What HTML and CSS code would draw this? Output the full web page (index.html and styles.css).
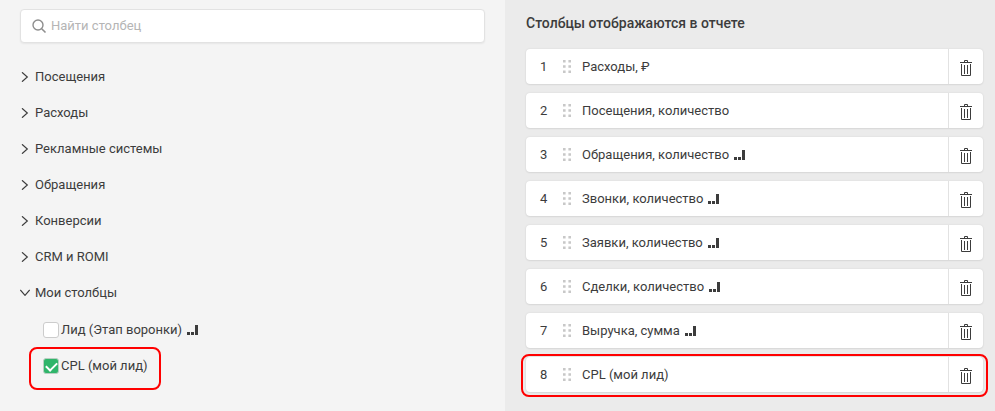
FILE: index.html
```html
<!DOCTYPE html>
<html lang="ru">
<head>
<meta charset="utf-8">
<title>Столбцы отчета</title>
<meta name="viewport" content="width=device-width, initial-scale=1">
<link rel="stylesheet" href="styles.css">
</head>
<body>
<svg class="symbols" aria-hidden="true">
  <symbol id="chevron" viewBox="0 0 10 10"><path d="M2 0.3 7.3 5 2 9.7" fill="none" stroke="currentColor" stroke-width="1.2"/></symbol>
  <symbol id="bars" viewBox="0 0 11 10"><path d="M0 7h3v3H0zM4 7h3v3H4zM8 0h3v10H8z" fill="currentColor"/></symbol>
  <symbol id="grip" viewBox="0 0 8 13"><path d="M0 0h2.6v2.4H0zM5.4 0H8v2.4H5.4zM0 5.2h2.6v2.6H0zM5.4 5.2H8v2.6H5.4zM0 10.6h2.6V13H0zM5.4 10.6H8V13H5.4z" fill="currentColor"/></symbol>
  <symbol id="trash" viewBox="0 0 12 16"><path d="M4.5 2V.5h3V2M0 2.5h12M1.5 4v11.5h9V4M4.5 5v9M7.5 5v9" fill="none" stroke="currentColor"/></symbol>
</svg>
<main class="layout">
  <section class="picker">
    <label class="search">
      <svg class="search-icon" viewBox="0 0 15 15" aria-hidden="true"><circle cx="6" cy="6" r="5" fill="none" stroke="currentColor" stroke-width="1.4"/><path d="M9.7 9.7 13.5 13.5" stroke="currentColor" stroke-width="1.6"/></svg>
      <input class="search-input" type="search" placeholder="Найти столбец" aria-label="Найти столбец">
    </label>
    <div class="groups">
      <button class="group" type="button"><svg class="chevron"><use href="#chevron"/></svg>Посещения</button>
      <button class="group" type="button"><svg class="chevron"><use href="#chevron"/></svg>Расходы</button>
      <button class="group" type="button"><svg class="chevron"><use href="#chevron"/></svg>Рекламные системы</button>
      <button class="group" type="button"><svg class="chevron"><use href="#chevron"/></svg>Обращения</button>
      <button class="group" type="button"><svg class="chevron"><use href="#chevron"/></svg>Конверсии</button>
      <button class="group" type="button"><svg class="chevron"><use href="#chevron"/></svg>CRM и ROMI</button>
      <button class="group" type="button" aria-expanded="true"><svg class="chevron chevron-open"><use href="#chevron"/></svg>Мои столбцы</button>
    </div>
    <div class="options">
      <label class="option"><input class="check" type="checkbox">Лид (Этап воронки)<svg class="bars"><use href="#bars"/></svg></label>
      <label class="option option-marked"><input class="check" type="checkbox" checked>CPL (мой лид)</label>
    </div>
  </section>
  <section class="report">
    <h2 class="title">Столбцы отображаются в отчете</h2>
    <ol class="columns">
      <li class="column"><span class="number">1</span><svg class="grip"><use href="#grip"/></svg><span class="name">Расходы, ₽</span><button class="remove" type="button" aria-label="Удалить"><svg class="trash"><use href="#trash"/></svg></button></li>
      <li class="column"><span class="number">2</span><svg class="grip"><use href="#grip"/></svg><span class="name">Посещения, количество</span><button class="remove" type="button" aria-label="Удалить"><svg class="trash"><use href="#trash"/></svg></button></li>
      <li class="column"><span class="number">3</span><svg class="grip"><use href="#grip"/></svg><span class="name">Обращения, количество<svg class="bars"><use href="#bars"/></svg></span><button class="remove" type="button" aria-label="Удалить"><svg class="trash"><use href="#trash"/></svg></button></li>
      <li class="column"><span class="number">4</span><svg class="grip"><use href="#grip"/></svg><span class="name">Звонки, количество<svg class="bars"><use href="#bars"/></svg></span><button class="remove" type="button" aria-label="Удалить"><svg class="trash"><use href="#trash"/></svg></button></li>
      <li class="column"><span class="number">5</span><svg class="grip"><use href="#grip"/></svg><span class="name">Заявки, количество<svg class="bars"><use href="#bars"/></svg></span><button class="remove" type="button" aria-label="Удалить"><svg class="trash"><use href="#trash"/></svg></button></li>
      <li class="column"><span class="number">6</span><svg class="grip"><use href="#grip"/></svg><span class="name">Сделки, количество<svg class="bars"><use href="#bars"/></svg></span><button class="remove" type="button" aria-label="Удалить"><svg class="trash"><use href="#trash"/></svg></button></li>
      <li class="column"><span class="number">7</span><svg class="grip"><use href="#grip"/></svg><span class="name">Выручка, сумма<svg class="bars"><use href="#bars"/></svg></span><button class="remove" type="button" aria-label="Удалить"><svg class="trash"><use href="#trash"/></svg></button></li>
      <li class="column column-marked"><span class="number">8</span><svg class="grip"><use href="#grip"/></svg><span class="name">CPL (мой лид)</span><button class="remove" type="button" aria-label="Удалить"><svg class="trash"><use href="#trash"/></svg></button></li>
    </ol>
  </section>
</main>
</body>
</html>
```
FILE: styles.css
```css
* { box-sizing: border-box; }
body {
  margin: 0;
  background: #f4f4f4;
  color: #3c3c3c;
  font: 13px/20px Roboto, "Liberation Sans", sans-serif;
}
button, input { font: inherit; color: inherit; }
svg { flex: none; }
.symbols { display: none; }
.layout {
  display: grid;
  grid-template-columns: 505fr 490fr;
  min-height: 100vh;
}
.picker { padding: 9px 20px 0; }
.search {
  display: flex;
  align-items: center;
  gap: 4px;
  height: 34px;
  padding: 0 11px;
  background: #fff;
  border: 1px solid #e2e2e2;
  border-radius: 4px;
  box-shadow: 0 1px 2px rgba(0, 0, 0, .06);
}
.search-icon { width: 15px; height: 15px; color: #8e8e8e; }
.search-input {
  flex: 1;
  min-width: 0;
  padding: 0;
  border: 0;
  outline: 0;
  background: none;
}
.search-input::placeholder { color: #b5b5b5; opacity: 1; }
.groups { display: flex; flex-direction: column; padding-top: 16px; }
.group {
  display: flex;
  align-items: center;
  gap: 5px;
  height: 36px;
  padding: 0;
  border: 0;
  background: none;
  text-align: left;
}
.chevron { width: 10px; height: 10px; }
.chevron-open { transform: rotate(90deg); }
.options { padding: 1px 0 0 23px; }
.option {
  position: relative;
  display: flex;
  align-items: center;
  gap: 2px;
  width: fit-content;
  height: 36px;
}
.check {
  appearance: none;
  display: grid;
  place-items: center;
  width: 16px;
  height: 16px;
  margin: 0;
  background: #fff;
  border: 1px solid #ccc;
  border-radius: 3px;
}
.check:checked { background: #2fb56a; border-color: #b9cfc2; }
.check:checked::before {
  content: "";
  width: 9px;
  height: 5px;
  border: solid #fff;
  border-width: 0 0 2px 2px;
  transform: translateY(-1px) rotate(-45deg);
}
.bars { width: 11px; height: 10px; margin-left: 5px; }
.option .bars { margin-left: 3px; }
.option-marked::after,
.column-marked::after {
  content: "";
  position: absolute;
  border: 2px solid #f00;
  border-radius: 8px;
  pointer-events: none;
}
.option-marked::after { inset: -1px -13px -6px -14px; }
.report { padding: 13px 12px 0 21px; background: #ebebeb; }
.title { margin: 0; font-size: 14px; font-weight: 500; line-height: 20px; }
.columns {
  display: grid;
  gap: 9px;
  margin: 0;
  padding: 16px 0 0;
  list-style: none;
}
.column {
  position: relative;
  display: flex;
  align-items: center;
  height: 35px;
  padding-left: 14px;
  background: #fff;
  border-radius: 4px;
  box-shadow: 0 0 2px rgba(0, 0, 0, .1), 0 1px 2px rgba(0, 0, 0, .06);
}
.column-marked::after { inset: -3px -5px -5px -5px; }
.number { width: 23px; }
.grip { width: 8px; height: 13px; color: #c8c8c8; }
.name { display: flex; align-items: center; flex: 1; padding-left: 11px; }
.remove {
  display: grid;
  place-items: center;
  align-self: stretch;
  width: 35px;
  padding: 2px 0 0;
  border: 0;
  border-left: 1px solid #e2e2e2;
  background: none;
}
.trash { width: 12px; height: 16px; }
```
